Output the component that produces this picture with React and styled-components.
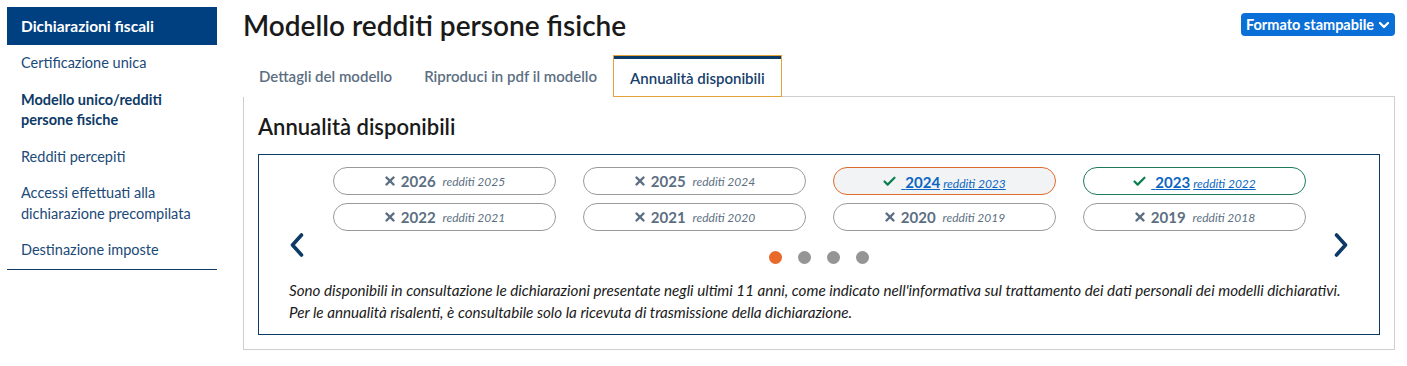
import React from 'react';
import styled, { createGlobalStyle } from 'styled-components';
import { X, Check, ChevronDown } from 'lucide-react';

const FONT = `Lato, "Noto Sans", sans-serif`;

const Global = createGlobalStyle`
  body {
    margin: 0;
    background: #fff;
    font-family: ${FONT};
    color: #1a1a1a;
  }
  * { box-sizing: border-box; }
`;

const Page = styled.div`
  display: flex;
  gap: 26px;
  padding: 7px 12px 16px 7px;
`;

const Sidebar = styled.nav`
  width: 210px;
  flex-shrink: 0;
  border-bottom: 1px solid #0d3a66;
  align-self: flex-start;
`;

const SideHead = styled.div`
  background: #004080;
  color: #fff;
  font-weight: 700;
  font-size: 15.5px;
  height: 38px;
  line-height: 38px;
  padding-left: 14px;
`;

const SideItem = styled.a`
  display: block;
  padding: 8px 14px;
  font-size: 14.5px;
  line-height: 20.5px;
  color: ${p => (p.$active ? '#0d3a66' : '#1b4a78')};
  font-weight: ${p => (p.$active ? 700 : 400)};
  text-decoration: none;
`;

const Main = styled.main`
  flex: 1;
  min-width: 0;
`;

const TopBar = styled.div`
  display: flex;
  justify-content: space-between;
  align-items: flex-start;
`;

const Title = styled.h1`
  margin: 0;
  font-size: 28px;
  line-height: 36px;
  font-weight: 600;
  color: #1a1a1a;
`;

const PrintButton = styled.button`
  margin-top: 6px;
  display: flex;
  align-items: center;
  gap: 2px;
  height: 23px;
  padding: 0 3px 0 5px;
  border: none;
  border-radius: 4px;
  background: #0a6fd6;
  color: #fff;
  font-family: ${FONT};
  font-size: 14.5px;
  font-weight: 700;
`;

const Tabs = styled.div`
  display: flex;
  margin-top: 12px;
  margin-bottom: -1px;
  position: relative;
  z-index: 1;
`;

const Tab = styled.div`
  height: 42px;
  display: flex;
  align-items: center;
  padding: ${p => (p.$active ? '3px 16px 0' : '0 15px')};
  font-size: 15px;
  font-weight: 600;
  color: ${p => (p.$active ? '#17406b' : '#5c6f82')};
  background: #fff;
  border: 1px solid ${p => (p.$active ? '#e3a23a' : 'transparent')};
  box-shadow: ${p => (p.$active ? 'inset 0 3px 0 #0b3a66' : 'none')};
`;

const Panel = styled.section`
  border: 1px solid #cfcfcf;
  padding: 15px 14px 14px 14px;
`;

const PanelTitle = styled.h2`
  margin: 0 0 12px;
  font-size: 22px;
  line-height: 30px;
  font-weight: 600;
  color: #1a1a1a;
`;

const Carousel = styled.div`
  position: relative;
  border: 1px solid #0b3a66;
  padding: 12px 0 11px;
`;

const Grid = styled.div`
  display: grid;
  grid-template-columns: repeat(4, 223px);
  column-gap: 27px;
  row-gap: 8px;
  justify-content: center;
`;

const Pill = styled.div`
  height: 28px;
  border-radius: 14px;
  border: 1px solid ${p => p.$border || '#9a9a9a'};
  background: ${p => p.$bg || '#fff'};
  display: flex;
  align-items: center;
  justify-content: center;
  gap: 4px;
  color: #5c6f82;
`;

const Year = styled.span`
  font-size: 15px;
  font-weight: 700;
`;

const Sub = styled.span`
  font-size: 12px;
  font-style: italic;
  margin-left: 3px;
`;

const YearLink = styled.a`
  color: #0a66c2;
  text-decoration: underline;
  white-space: pre;
`;

const Dots = styled.div`
  display: flex;
  justify-content: center;
  gap: 16px;
  margin-top: 20px;
`;

const Dot = styled.span`
  width: 13px;
  height: 13px;
  border-radius: 50%;
  background: ${p => (p.$on ? '#e8692a' : '#959595')};
`;

const Note = styled.p`
  margin: 15px 0 0;
  padding-left: 30px;
  font-size: 15.2px;
  font-style: italic;
  line-height: 22px;
  color: #1a1a1a;
`;

const Arrow = styled.button`
  position: absolute;
  top: 50%;
  transform: translateY(-50%);
  ${p => (p.$side === 'left' ? 'left: 30px;' : 'right: 30px;')}
  width: 16px;
  height: 24px;
  padding: 0;
  border: none;
  background: none;
  display: flex;
  align-items: center;
  justify-content: center;
`;

const Chevron = ({ dir }) => (
  <svg width="14" height="24" viewBox="0 0 14 24">
    <polyline
      points={dir === 'left' ? '11.5,2 2.5,12 11.5,22' : '2.5,2 11.5,12 2.5,22'}
      fill="none"
      stroke="#0b3a66"
      strokeWidth="3.6"
      strokeLinecap="round"
      strokeLinejoin="round"
    />
  </svg>
);

const years = [
  { y: 2026 }, { y: 2025 }, { y: 2024, ok: true, border: '#e06a28', bg: '#f1f3f5' }, { y: 2023, ok: true, border: '#1d7a5a' },
  { y: 2022 }, { y: 2021 }, { y: 2020 }, { y: 2019 },
];

const menu = [
  'Certificazione unica',
  'Modello unico/redditi persone fisiche',
  'Redditi percepiti',
  'Accessi effettuati alla dichiarazione precompilata',
  'Destinazione imposte',
];

export default function App() {
  return (
    <>
      <Global />
      <Page>
        <Sidebar>
          <SideHead>Dichiarazioni fiscali</SideHead>
          {menu.map((m, i) => (
            <SideItem key={m} $active={i === 1} href="#">{m}</SideItem>
          ))}
        </Sidebar>
        <Main>
          <TopBar>
            <Title>Modello redditi persone fisiche</Title>
            <PrintButton>
              Formato stampabile <ChevronDown size={16} strokeWidth={3.5} />
            </PrintButton>
          </TopBar>
          <Tabs>
            <Tab>Dettagli del modello</Tab>
            <Tab>Riproduci in pdf il modello</Tab>
            <Tab $active>Annualità disponibili</Tab>
          </Tabs>
          <Panel>
            <PanelTitle>Annualità disponibili</PanelTitle>
            <Carousel>
              <Arrow $side="left"><Chevron dir="left" /></Arrow>
              <Grid>
                {years.map(item => (
                  <Pill key={item.y} $border={item.border} $bg={item.bg}>
                    {item.ok ? (
                      <>
                        <Check size={15} strokeWidth={3.5} color="#0a8050" />
                        <YearLink href="#">
                          {' '}<Year>{item.y}</Year><Sub>redditi {item.y - 1}</Sub>
                        </YearLink>
                      </>
                    ) : (
                      <>
                        <X size={14} strokeWidth={4.2} />
                        <Year>{item.y}</Year>
                        <Sub>redditi {item.y - 1}</Sub>
                      </>
                    )}
                  </Pill>
                ))}
              </Grid>
              <Dots>
                <Dot $on /><Dot /><Dot /><Dot />
              </Dots>
              <Note>
                Sono disponibili in consultazione le dichiarazioni presentate negli ultimi 11 anni, come indicato nell'informativa sul trattamento dei dati personali dei modelli dichiarativi.
                <br />
                Per le annualità risalenti, è consultabile solo la ricevuta di trasmissione della dichiarazione.
              </Note>
              <Arrow $side="right"><Chevron dir="right" /></Arrow>
            </Carousel>
          </Panel>
        </Main>
      </Page>
    </>
  );
}
